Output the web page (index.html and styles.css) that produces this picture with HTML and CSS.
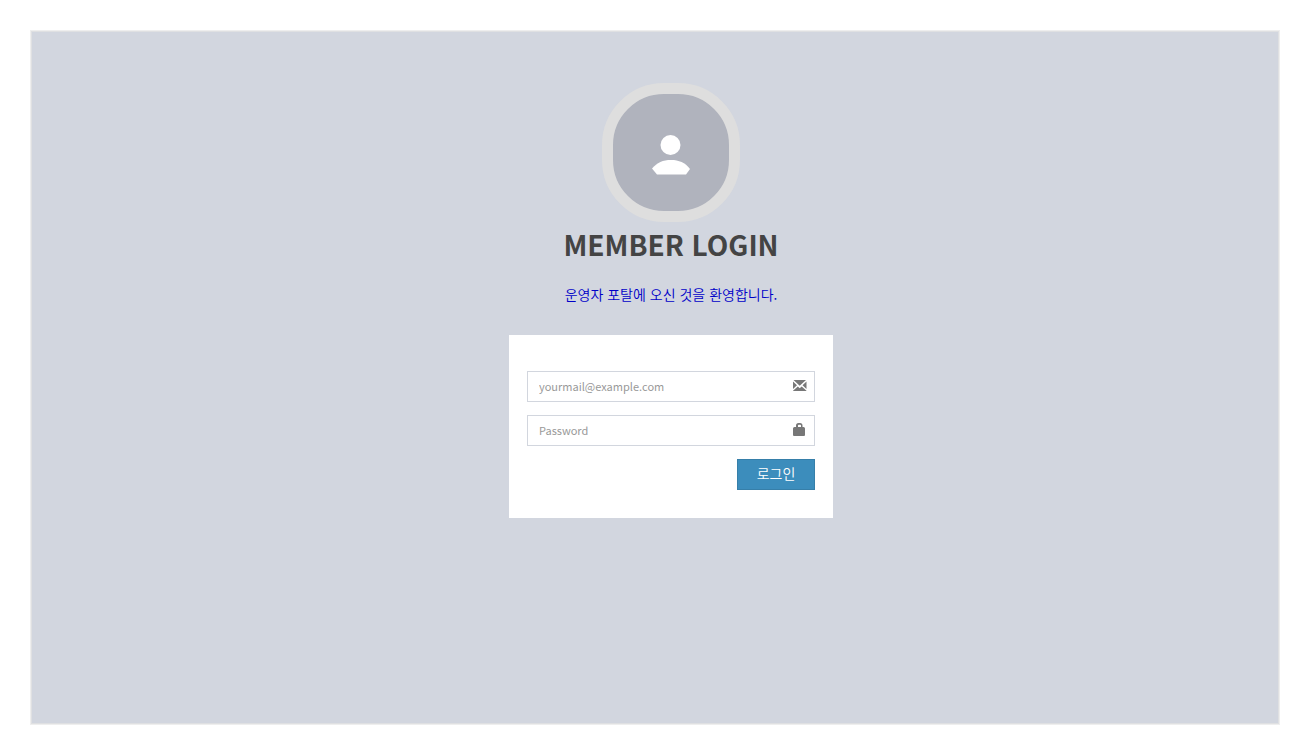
FILE: index.html
```html
<!DOCTYPE html>
<html lang="ko">
<head>
<meta charset="utf-8">
<meta name="viewport" content="width=device-width, initial-scale=1">
<title>Member Login</title>
<link rel="stylesheet" href="styles.css">
</head>
<body>
<main class="panel">
  <div class="login">
    <div class="avatar">
      <svg class="avatar-icon" viewBox="0 0 40 40" aria-hidden="true"><circle cx="19.500" cy="10" r="10"/><path d="M1 33.500C6 27.500 12 25 20 25s14 2.500 19 9L35 39.500H6z"/></svg>
    </div>
    <h1 class="title">MEMBER LOGIN</h1>
    <p class="welcome"><a class="welcome-link" href="#">운영자 포탈에 오신 것을 환영합니다.</a></p>
    <form class="card">
      <div class="field">
        <input class="input" type="email" placeholder="yourmail@example.com" aria-label="Email">
        <svg class="icon" viewBox="0 0 14 14" aria-hidden="true"><path d="M.5 1h12.500L6.700 6.800zM0 2.500 4 6.300 0 10zM13.500 2.500 9.500 6.300 13.500 10zM4.800 7.500 6.700 9.300l2-1.800 4.800 4.300v.2H0v-.2z"/></svg>
      </div>
      <div class="field">
        <input class="input" type="password" placeholder="Password" aria-label="Password">
        <svg class="icon" viewBox="0 0 14 14" aria-hidden="true"><path fill-rule="evenodd" d="M3 4V2.500Q3 0 5.500 0h1.500Q9.500 0 9.500 2.500V4h1q1.500 0 1.500 1.500V12q0 1-1 1h-10q-1 0-1-1V5.500Q0 4 1.500 4zM5 4h3V2.500q0-.8-.8-.8H5.800q-.8 0-.8.8z"/></svg>
      </div>
      <button class="submit" type="submit">로그인</button>
    </form>
  </div>
</main>
</body>
</html>
```
FILE: styles.css
```css
* {
  box-sizing: border-box;
}

body {
  margin: 0;
  padding: 30px;
  background: #fff;
  font-family: "Noto Sans CJK KR", "Noto Sans", sans-serif;
  color: #444;
}

.panel {
  min-height: calc(100vh - 60px);
  padding: 52px 0 52px 32px;
  border: 1px solid #eee;
  background: #d2d6df;
  box-shadow: inset 0 0 0 1px #dfe0e2;
}

.login {
  display: flex;
  flex-direction: column;
  align-items: center;
  width: 100%;
  max-width: 324px;
  margin: 0 auto;
}

.avatar {
  display: flex;
  align-items: center;
  justify-content: center;
  width: 138px;
  height: 139px;
  padding-top: 4px;
  border: 11px solid #dedede;
  border-radius: 62px;
  background: #b0b3bd;
}

.avatar-icon {
  width: 40px;
  height: 40px;
  fill: #fff;
}

.title {
  margin: 2px 0 0;
  font-size: 28px;
  line-height: 40px;
  font-weight: 700;
}

.welcome {
  margin: 20px 0 31px;
  font-size: 14px;
  line-height: 20px;
  font-weight: 350;
}

.welcome-link {
  color: #0000c8;
  text-decoration: none;
}

.card {
  display: flex;
  flex-direction: column;
  gap: 13px;
  width: 100%;
  padding: 36px 18px 28px;
  background: #fff;
}

.field {
  position: relative;
}

.input {
  display: block;
  width: 100%;
  height: 31px;
  padding: 0 36px 2px 11px;
  border: 1px solid #d2d6de;
  border-radius: 0;
  background: #fff;
  font-family: inherit;
  font-size: 11px;
  color: #555;
}

.input::placeholder {
  color: #999;
  opacity: 1;
}

.icon {
  position: absolute;
  top: 8px;
  right: 8px;
  width: 14px;
  height: 14px;
  fill: #777;
  pointer-events: none;
}

.submit {
  align-self: flex-end;
  width: 78px;
  height: 31px;
  padding: 0 0 4px;
  border: 1px solid #367fa9;
  border-radius: 0;
  background: #3c8dbc;
  color: #fff;
  font-family: inherit;
  font-size: 14px;
  font-weight: 350;
  line-height: 20px;
}
```
